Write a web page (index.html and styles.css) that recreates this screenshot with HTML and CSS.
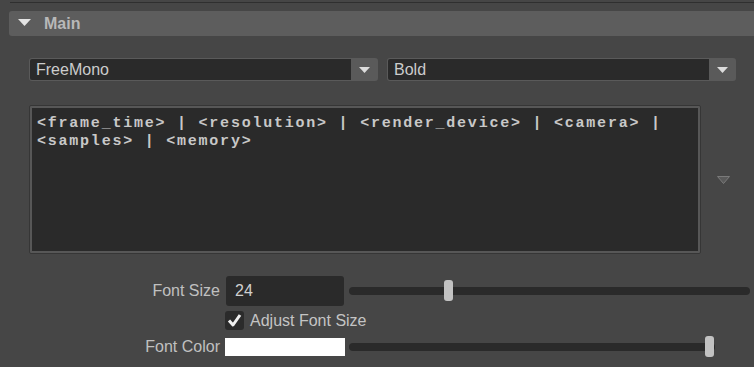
FILE: index.html
```html
<html>
	<head>
		<title>Text Overlay</title>
		<link rel="stylesheet" href="styles.css">
	</head>
	<body>
		<div class="rule"></div>
		<div class="section-head">
			<svg class="caret" width="13" height="7" viewBox="0 0 13 7"><polygon points="0,0 13,0 6.5,7" fill="#e4e4e4"/></svg>
			<span class="section-title">Main</span>
		</div>
		<div class="font-row">
			<div class="combo">
				<span class="combo-value">FreeMono</span>
				<span class="combo-btn"><svg width="11" height="6" viewBox="0 0 11 6"><polygon points="0,0 11,0 5.5,6" fill="#dcdcdc"/></svg></span>
			</div>
			<div class="combo">
				<span class="combo-value">Bold</span>
				<span class="combo-btn"><svg width="11" height="6" viewBox="0 0 11 6"><polygon points="0,0 11,0 5.5,6" fill="#dcdcdc"/></svg></span>
			</div>
		</div>
		<div class="text-row">
			<div class="text-box">
				<div class="text-inner">&lt;frame_time&gt; | &lt;resolution&gt; | &lt;render_device&gt; | &lt;camera&gt; | &lt;samples&gt; | &lt;memory&gt;</div>
			</div>
			<svg class="expand" width="13" height="8" viewBox="0 0 13 8"><polygon points="0.5,0.5 12.5,0.5 6.5,7.5" fill="#5a5a5a" stroke="#7a7a7a" stroke-width="1"/></svg>
		</div>
		<div class="prop-row size-row">
			<label class="prop-label">Font Size</label>
			<div class="num-field">24</div>
			<div class="slider">
				<div class="track"></div>
				<div class="thumb" style="left: 95px"></div>
			</div>
		</div>
		<div class="prop-row check-row">
			<span class="prop-label"></span>
			<span class="check-box"><svg width="19" height="19" viewBox="0 0 19 19"><polyline points="4,9.5 8,14 15,4" fill="none" stroke="#f0f0f0" stroke-width="3" stroke-linejoin="round"/></svg></span>
			<span class="check-text">Adjust Font Size</span>
		</div>
		<div class="prop-row color-row">
			<label class="prop-label">Font Color</label>
			<div class="swatch"></div>
			<div class="slider short">
				<div class="track"></div>
				<div class="thumb" style="left: 356px"></div>
			</div>
		</div>
	</body>
</html>
```

FILE: styles.css
```css
body {
	margin: 0;
	background: #464646;
	font-family: "Liberation Sans", Arial, sans-serif;
	font-size: 16px;
	color: #c4c4c4;
	width: 754px;
	height: 367px;
	overflow: hidden;
}
.rule {
	margin: 2px 0 0 10px;
	height: 1px;
	background: #2f2f2f;
}
.section-head {
	display: flex;
	align-items: center;
	margin: 8px 0 0 9px;
	height: 25px;
	padding-left: 9px;
	background: #5d5d5d;
	border-radius: 3px 0 0 3px;
}
.caret {
	margin-top: -2px;
}
.section-title {
	margin-left: 13px;
	padding-top: 1px;
	font-weight: bold;
	color: #b8b8b8;
}
.font-row {
	display: flex;
	gap: 9px;
	margin: 22px 18px 0 29px;
}
.combo {
	flex: 1;
	display: flex;
	height: 23px;
	box-sizing: border-box;
	padding: 1px;
	background: #5a5a5a;
	border-radius: 3px;
}
.combo-value {
	flex: 1;
	display: flex;
	align-items: center;
	padding-left: 6px;
	background: #2a2a2a;
	border-radius: 2px 0 0 2px;
	color: #cccccc;
}
.combo-btn {
	width: 26px;
	display: flex;
	align-items: center;
	justify-content: center;
}
.text-row {
	display: flex;
	align-items: center;
	margin: 24px 0 0 29px;
}
.text-box {
	width: 672px;
	height: 149px;
	box-sizing: border-box;
	border: 1px solid #363636;
	border-radius: 2px;
	padding: 2px;
	background: #575757;
}
.text-inner {
	height: 100%;
	box-sizing: border-box;
	padding: 7px 5px;
	background: #2a2a2a;
	font-family: "Liberation Mono", "Courier New", monospace;
	font-weight: bold;
	font-size: 15px;
	letter-spacing: 1.77px;
	line-height: 18px;
	color: #c8c8c8;
}
.expand {
	margin-left: 16px;
}
.prop-row {
	display: flex;
	align-items: center;
}
.prop-label {
	width: 220px;
	text-align: right;
	color: #c0c0c0;
}
.size-row {
	margin-top: 22px;
	height: 30px;
}
.num-field {
	margin-left: 6px;
	width: 118px;
	height: 30px;
	box-sizing: border-box;
	padding-left: 9px;
	display: flex;
	align-items: center;
	background: #2a2a2a;
	border-radius: 3px;
	color: #d0d0d0;
}
.slider {
	position: relative;
	margin-left: 5px;
	width: 401px;
	height: 22px;
	display: flex;
	align-items: center;
}
.slider.short {
	margin-left: 4px;
	width: 366px;
}
.track {
	width: 100%;
	height: 8px;
	border-radius: 4px;
	background: #2a2a2a;
}
.thumb {
	position: absolute;
	top: 0;
	width: 9px;
	height: 21px;
	border-radius: 3px;
	background: #c2c2c2;
}
.check-row {
	margin-top: 5px;
	height: 19px;
}
.check-box {
	margin-left: 5px;
	width: 19px;
	height: 19px;
	background: #2b2b2b;
	border-radius: 3px;
}
.check-text {
	margin-left: 6px;
	color: #c4c4c4;
}
.color-row {
	margin-top: 8px;
	height: 18px;
}
.swatch {
	margin-left: 5px;
	width: 120px;
	height: 18px;
	background: #ffffff;
}
```
